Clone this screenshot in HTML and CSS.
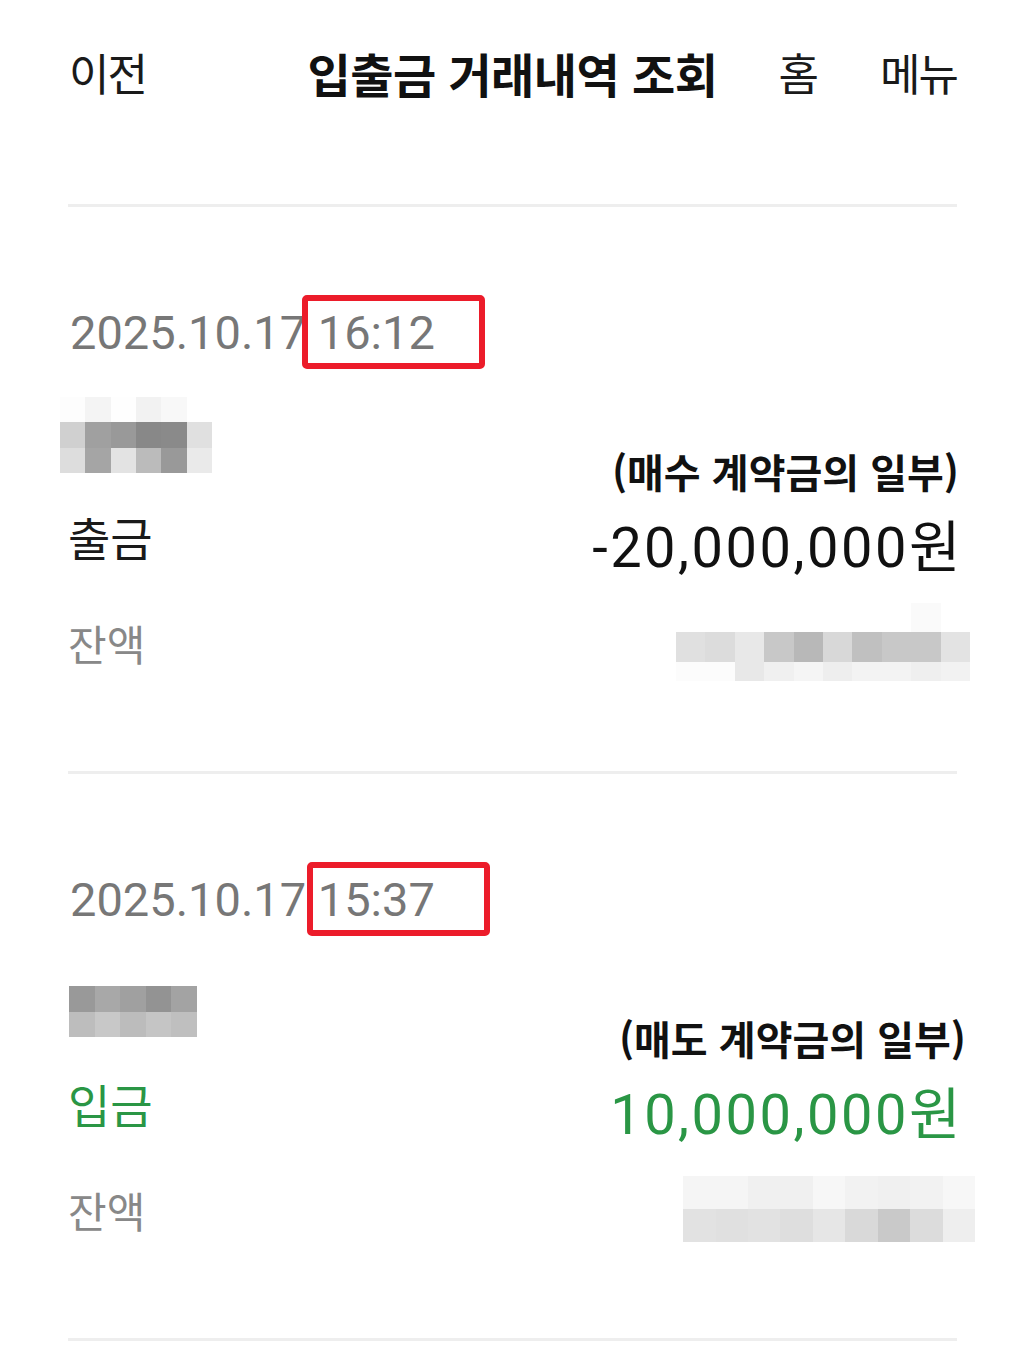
FILE: index.html
```html
<!DOCTYPE html>
<html lang="ko">

<head>
    <meta charset="UTF-8">
    <meta name="viewport" content="width=device-width, initial-scale=1.0">
    <title>입출금 거래내역 조회</title>
    <link rel="stylesheet" href="styles.css">
</head>

<body>
    <div class="page">
        <header class="topbar">
            <a class="nav-back">이전</a>
            <h1 class="title">입출금 거래내역 조회</h1>
            <nav class="nav-right">
                <a>홈</a>
                <a>메뉴</a>
            </nav>
        </header>

        <div class="line"></div>

        <section class="entry">
            <div class="when">2025.10.17 <span class="time">16:12</span></div>
            <div class="who-row">
                <div class="mosaic name" data-cols="6" data-w="25.33" data-h="25.33,25.33,25.34"
                    data-tones="fdfdfd,f4f4f4,fefefe,f2f2f2,f8f8f8,ffffff,d0d0d0,a0a0a0,999999,888888,8a8a8a,e0e0e0,dddddd,a5a5a5,e3e3e3,bbbbbb,999999,eaeaea"></div>
                <div class="memo">(매수 계약금의 일부)</div>
            </div>
            <div class="amount-row">
                <div class="kind">출금</div>
                <div class="sum">-20,000,000원</div>
            </div>
            <div class="balance-row">
                <div class="balance-label">잔액</div>
                <div class="mosaic balance" data-cols="10" data-w="29.4" data-h="29,30,19"
                    data-tones="ffffff,ffffff,ffffff,ffffff,ffffff,ffffff,ffffff,ffffff,fafafa,ffffff,e0e0e0,dcdcdc,e8e8e8,c8c8c8,b8b8b8,d8d8d8,c0c0c0,c8c8c8,c8c8c8,e3e3e3,fcfcfc,fcfcfc,e8e8e8,f0f0f0,f5f5f5,eeeeee,f3f3f3,f3f3f3,efefef,f2f2f2"></div>
            </div>
        </section>

        <div class="line"></div>

        <section class="entry">
            <div class="when">2025.10.17 <span class="time alt">15:37</span></div>
            <div class="who-row">
                <div class="mosaic name shifted" data-cols="5" data-w="25.6" data-h="25.5,25.5"
                    data-tones="999999,a8a8a8,a0a0a0,939393,a3a3a3,bdbdbd,c8c8c8,bcbcbc,c5c5c5,bfbfbf"></div>
                <div class="memo wide">(매도 계약금의 일부)</div>
            </div>
            <div class="amount-row">
                <div class="kind in">입금</div>
                <div class="sum in">10,000,000원</div>
            </div>
            <div class="balance-row">
                <div class="balance-label">잔액</div>
                <div class="mosaic balance wide" data-cols="9" data-w="32.44" data-h="33,33"
                    data-tones="f5f5f5,f5f5f5,f0f0f0,f0f0f0,f7f7f7,f2f2f2,f0f0f0,f2f2f2,f7f7f7,e2e2e2,e0e0e0,e2e2e2,dedede,e6e6e6,d9d9d9,c9c9c9,dcdcdc,eeeeee"></div>
            </div>
        </section>

        <div class="line"></div>
    </div>

    <script>
        // blurred (pixelated) areas for hidden names / balances
        document.querySelectorAll(".mosaic").forEach(function (box) {
            const cols = Number(box.dataset.cols);
            const rows = box.dataset.h.split(",");
            box.style.gridTemplateColumns = "repeat(" + cols + ", " + box.dataset.w + "px)";
            box.style.gridTemplateRows = rows.map(h => h + "px").join(" ");
            box.dataset.tones.split(",").forEach(function (tone) {
                const cell = document.createElement("span");
                cell.style.background = "#" + tone;
                box.appendChild(cell);
            });
        });
    </script>
</body>

</html>
```

FILE: styles.css
```css
body {
    margin: 0;
    background: #fff;
    color: #111;
    font-family: Roboto, "Noto Sans CJK KR", sans-serif;
}

.page {
    padding: 0 69px 0 68px;
}

.topbar {
    display: grid;
    grid-template-columns: 1fr auto 1fr;
    align-items: center;
    height: 144px;
    margin-bottom: 60px;
    font-family: "Noto Sans CJK KR", sans-serif;
}

.nav-back {
    font-size: 44px;
    letter-spacing: -2px;
    color: #1a1a1a;
    padding-left: 1px;
}

.title {
    margin: 0;
    font-size: 47px;
    font-weight: 700;
    letter-spacing: -0.5px;
    color: #111;
}

.nav-right {
    display: flex;
    justify-content: flex-end;
    gap: 63px;
    font-size: 44px;
    letter-spacing: -2px;
    color: #1a1a1a;
}

.line {
    height: 3px;
    background: #eeeeee;
}

.entry {
    padding: 96px 0 74px;
}

.when {
    font-size: 47px;
    line-height: 60px;
    color: #777;
    padding-left: 2px;
}

.time {
    position: relative;
}

.time::after {
    content: "";
    position: absolute;
    left: -16px;
    top: -10px;
    width: 183px;
    height: 74px;
    box-sizing: border-box;
    border: 6px solid #ec1c2a;
    border-radius: 5px;
}

.time.alt::after {
    left: -11px;
}

.who-row {
    display: flex;
    justify-content: space-between;
    align-items: flex-end;
    height: 134px;
}

.mosaic {
    display: grid;
}

.mosaic.name {
    margin-left: -8px;
    margin-bottom: 24px;
}

.mosaic.name.shifted {
    margin-left: 1px;
    margin-bottom: 27px;
}

.memo {
    font-family: "Noto Sans CJK KR", sans-serif;
    font-size: 40px;
    font-weight: 700;
    line-height: 52px;
    letter-spacing: 0;
    color: #111;
    margin-right: -2px;
}

.memo.wide {
    margin-right: -9px;
}

.amount-row {
    display: flex;
    justify-content: space-between;
    align-items: center;
    height: 90px;
}

.kind {
    font-family: "Noto Sans CJK KR", sans-serif;
    font-size: 46px;
    color: #1a1a1a;
    margin-top: -12px;
}

.sum {
    font-size: 56px;
    letter-spacing: 2.5px;
    color: #111;
    margin-right: -6px;
}

.kind.in, .sum.in {
    color: #2a9645;
}

.balance-row {
    display: flex;
    justify-content: space-between;
    align-items: center;
    height: 110px;
}

.balance-label {
    font-family: "Noto Sans CJK KR", sans-serif;
    font-size: 42px;
    color: #888;
}

.mosaic.balance {
    margin-right: -13px;
}

.mosaic.balance.wide {
    margin-right: -18px;
}
```
